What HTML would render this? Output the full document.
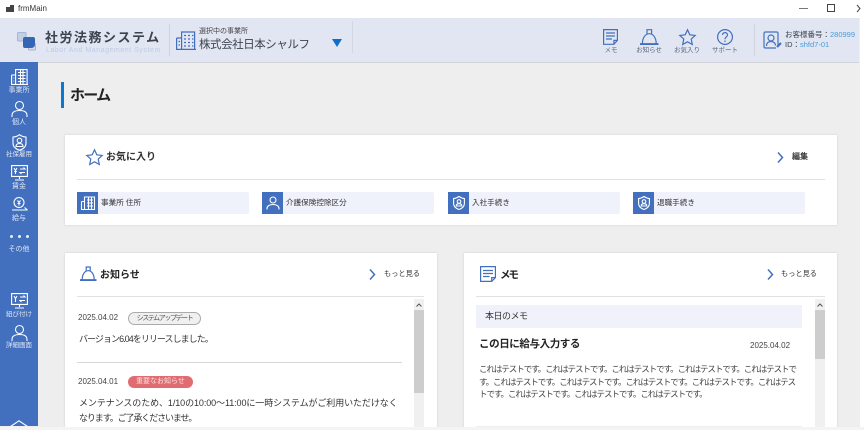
<!DOCTYPE html>
<html lang="ja"><head><meta charset="utf-8"><title>frmMain</title>
<style>
html,body{margin:0;padding:0}
body{width:864px;height:430px;position:relative;overflow:hidden;background:#fff;font-family:"Liberation Sans","Noto Sans CJK JP",sans-serif;color:#222}
.a{position:absolute;white-space:nowrap}
.card{position:absolute;background:#fff;box-shadow:0 0 2px #ccc}
svg{position:absolute;overflow:visible;fill:none}
.b{stroke:#4270be;stroke-width:1.2}
.w{stroke:#fff;stroke-width:1.1}
.nav{position:absolute;left:0;width:38px;text-align:center;color:#dfe6f5;font-size:7px;line-height:8px;white-space:nowrap}
.fav{position:absolute;top:192px;height:22px;width:172px;background:#eff2fa;border-radius:2px}
.fav i{position:absolute;left:0;top:0;width:21px;height:22px;background:#4270be}
.fav span{position:absolute;left:24px;top:5px;font-size:7.600px;line-height:12px;color:#333;white-space:nowrap}
.hd{position:absolute;text-align:center;font-size:6.500px;line-height:8px;color:#5c6780;top:47px;white-space:nowrap}
</style></head><body>
<!-- title bar -->
<svg style="left:6px;top:4px" width="9" height="9"><path d="M0 3h4v5H0zM4 1h4v7H4z" fill="#444"/></svg>
<div class="a" style="left:18px;top:3px;font-size:8px;line-height:12px;color:#333">frmMain</div>
<div class="a" style="left:799px;top:8px;width:9px;height:1px;background:#777"></div>
<div class="a" style="left:827px;top:4px;width:6px;height:6px;border:1px solid #444"></div>
<svg style="left:857px;top:5px" width="7" height="8"><path d="M0 0l3 3.500l-3 3.500" stroke="#444"/></svg>

<!-- background -->
<div class="a" style="left:0;top:18px;width:860px;height:409px;background:#eee"></div>
<div class="a" style="left:0;top:18px;width:859px;height:44px;background:#e1e6f2;border-bottom:1px solid #d3d5da"></div>
<div class="a" style="left:0;top:62px;width:38px;height:364px;background:#4270be"></div>

<!-- logo -->
<svg style="left:16px;top:30px" width="22" height="22">
<rect x="1.500" y="2.500" width="8.500" height="8.500" rx="1" fill="#c3cfe4" stroke="#a6b6d2"/>
<rect x="12.500" y="13.500" width="7" height="6.500" rx="1" fill="#d4dcec" stroke="#a6b6d2"/>
<path d="M7 9q0-2 2-2h8q2 0 2 2v5q0 4-4 4H9q-2 0-2-2z" fill="#3565b5"/>
</svg>
<div class="a" style="left:45px;top:28px;font-size:13px;line-height:20px;font-weight:bold;color:#3c4450;letter-spacing:1.500px">社労法務システム</div>
<div class="a" style="left:46px;top:46px;font-size:7px;line-height:9px;color:#bdcce6;letter-spacing:.55px">Labor And Management System</div>
<div class="a" style="left:169px;top:24px;width:1px;height:32px;background:#cfd3dc"></div>
<svg style="left:176px;top:31px" width="20" height="19"><path class="b" d="M.6 7h5M.6 18.400V7M5.600 18.400V1h13v17.400M0 18.400h20M8 4.500h2m2 0h2m2 0h1.500M8 8h2m2 0h2m2 0h1.500M8 11.500h2m2 0h2m2 0h1.500M8 15h2m2 0h2m2 0h1.500M2.500 10.500h1.500M2.500 14h1.500"/></svg>
<div class="a" style="left:199px;top:27px;font-size:7px;line-height:10px;color:#444">選択中の事業所</div>
<div class="a" style="left:199px;top:37px;font-size:11.500px;line-height:16px;color:#3c4450;letter-spacing:-.45px">株式会社日本シャルフ</div>
<svg style="left:332px;top:39px" width="10" height="8"><path d="M0 0h10L5 8z" fill="#0d6fcb"/></svg>
<div class="a" style="left:352px;top:21px;width:1px;height:32px;background:#d3d7e0"></div>

<!-- header right icons -->
<svg style="left:603px;top:29px" width="15" height="16"><path class="b" d="M.6.600h13.800v10.800l-3.500 3.900H.6zM3 4h9M3 7h9M3 10h6M10.900 15.300v-3.900h3.500"/></svg>
<div class="hd" style="left:596px;width:30px">メモ</div>
<svg style="left:640px;top:29px" width="19" height="16"><path class="b" d="M.6 14.700h17.300v.7H.6zM2.400 14.700c0-6 3-10 6.900-10s6.900 4 6.900 10M7 4.700V.7h4.600v4"/></svg>
<div class="hd" style="left:634px;width:30px">お知らせ</div>
<svg style="left:679px;top:29px" width="17" height="16"><path class="b" d="M8.500.8l2.300 5 5.400.6-4 3.700 1.100 5.400-4.800-2.700-4.800 2.700 1.100-5.400-4-3.700 5.400-.6z"/></svg>
<div class="hd" style="left:672px;width:30px">お気入り</div>
<svg style="left:717px;top:29px" width="16" height="16"><circle class="b" cx="8" cy="8" r="7.400"/><path class="b" d="M5.500 6c0-3.200 5-3.200 5 0 0 2-2.500 2-2.500 4.300M8 11.500v1.500"/></svg>
<div class="hd" style="left:710px;width:30px">サポート</div>
<div class="a" style="left:754px;top:24px;width:1px;height:32px;background:#cfd3dc"></div>
<svg style="left:763px;top:31px" width="19" height="19"><path class="b" d="M15 15.500V2.500q0-1.500-1.500-1.500h-11Q1 1 1 2.500v13q0 1.500 1.500 1.500H13"/><circle class="b" cx="8" cy="7" r="3"/><path class="b" d="M3.500 15c0-3 2-4.500 4.500-4.500s4.500 1.500 4.500 4"/><path d="M14 16l4-4" stroke="#4270be" stroke-width="2"/></svg>
<div class="a" style="left:785px;top:30px;font-size:7.500px;line-height:10px;color:#3c4450">お客様番号：<span style="color:#4a9ad8">280999</span></div>
<div class="a" style="left:785px;top:40px;font-size:7.500px;line-height:10px;color:#3c4450">ID：<span style="color:#4a9ad8">shfd7-01</span></div>

<!-- sidebar -->
<svg style="left:11px;top:69px" width="17" height="16"><path class="w" d="M.6 6h4M.6 15.400V6M4.600 15.400V.6h11.500v14.800M0 15.400h17M7 3.500h7.500M7 6.500h7.500M7 9.500h7.500M7 12.500h7.500M9.500.6v14.800M12 .6v14.800M2.500 9h.8M2.500 12h.8"/></svg>
<div class="nav" style="top:87px">事業所</div>
<svg style="left:11px;top:101px" width="17" height="16"><circle class="w" cx="8.500" cy="4.500" r="4"/><path class="w" d="M1 16v-1.500C1 11 4 9.500 8.500 9.500S16 11 16 14.500V16"/></svg>
<div class="nav" style="top:119px">個人</div>
<svg style="left:12px;top:134px" width="15" height="17"><path class="w" d="M7.500.7c2 1.500 4 2.200 6.500 2.400v6c0 3.500-3 6-6.500 7.200C4 15.100 1 12.600 1 9.100v-6C3.500 2.900 5.500 2.200 7.500.7z"/><circle class="w" cx="7.500" cy="6.500" r="2.300"/><path class="w" d="M4 12.500c0-2 1.500-3 3.500-3s3.500 1 3.500 3z"/></svg>
<div class="nav" style="top:151px;font-size:6.500px">社保雇用</div>
<svg style="left:11px;top:165px" width="17" height="17"><path class="w" d="M.6.600h15.800v10.800H.6zM8.500 11.400V14M4 15h9"/><path class="w" d="M9 4h5l-1.500-1.500M14 7.500H9l1.500 1.500M3 3l1.500 2.500L6 3M4.500 5.500V9M3.200 6.500h2.600"/></svg>
<div class="nav" style="top:183px">賃金</div>
<svg style="left:12px;top:197px" width="17" height="16"><circle class="w" cx="7" cy="5.500" r="5"/><path class="w" d="M5.500 3.500L7 5.500l1.500-2M7 5.500V8.500M5.500 6.500h3M0 13h15.500m-3-2.500l3 2.500"/></svg>
<div class="nav" style="top:215px">給与</div>
<div class="a" style="left:10px;top:235px;width:3px;height:3px;border-radius:50%;background:#e8edf7"></div>
<div class="a" style="left:18px;top:235px;width:3px;height:3px;border-radius:50%;background:#e8edf7"></div>
<div class="a" style="left:26px;top:235px;width:3px;height:3px;border-radius:50%;background:#e8edf7"></div>
<div class="nav" style="top:246px">その他</div>
<svg style="left:11px;top:293px" width="17" height="17"><path class="w" d="M.6.600h15.800v10.800H.6zM8.500 11.400V14M4 15h9"/><path class="w" d="M9 4h5l-1.500-1.500M14 7.500H9l1.500 1.500M3 3l1.500 2.500L6 3M4.500 5.500V9"/></svg>
<div class="nav" style="top:311px;font-size:6.500px">紐び付け</div>
<svg style="left:11px;top:325px" width="17" height="16"><circle class="w" cx="8.500" cy="4.500" r="4"/><path class="w" d="M1 16v-1.500C1 11 4 9.500 8.500 9.500S16 11 16 14.500V16"/></svg>
<div class="nav" style="top:342px;font-size:6.500px">詳細画面</div>
<svg style="left:10px;top:420px" width="18" height="7"><path class="w" d="M.5 6.500L9 .8l8.500 5.700"/></svg>

<!-- page title -->
<div class="a" style="left:61px;top:82px;width:3px;height:26px;background:#0d78d0"></div>
<div class="a" style="left:70px;top:85px;font-size:15px;line-height:22px;font-weight:bold;color:#222;letter-spacing:-1.700px">ホーム</div>

<!-- favourites -->
<div class="card" style="left:65px;top:135px;width:772px;height:90px"></div>
<svg style="left:86px;top:149px" width="17" height="16"><path class="b" d="M8.500.8l2.300 5 5.400.6-4 3.700 1.100 5.400-4.800-2.700-4.800 2.700 1.100-5.400-4-3.700 5.400-.6z"/></svg>
<div class="a" style="left:106px;top:151px;font-size:10px;line-height:14px;font-weight:bold;color:#333">お気に入り</div>
<svg style="left:777px;top:152px" width="7" height="11"><path d="M1 .5l4.500 5-4.500 5" stroke="#4270be" stroke-width="1.500"/></svg>
<div class="a" style="left:792px;top:151px;font-size:8px;line-height:12px;font-weight:bold;color:#333">編集</div>
<div class="a" style="left:77px;top:179px;width:748px;height:1px;background:#e2e2e2"></div>

<div class="fav" style="left:77px"><i></i><span>事業所 住所</span>
<svg style="left:4px;top:4px" width="14" height="14"><path class="w" d="M.5 5.500h3M.5 13.500v-8M3.500 13.500V1h10v12.500M0 13.500h14M6 4h6M6 7h6M6 10h6M7.500 1v12M10.500 1v12"/></svg></div>
<div class="fav" style="left:262px"><i></i><span>介護保険控除区分</span>
<svg style="left:4px;top:4px" width="14" height="14"><circle class="w" cx="7" cy="4" r="3"/><path class="w" d="M1 13.500v-1C1 10 3.500 8.500 7 8.500s6 1.500 6 4v1"/></svg></div>
<div class="fav" style="left:448px"><i></i><span>入社手続き</span>
<svg style="left:5px;top:4px" width="12" height="14"><path class="w" d="M6 .5c1.600 1.200 3.300 1.800 5.400 2v5c0 3-2.500 5-5.400 6-2.900-1-5.400-3-5.400-6v-5C2.700 2.300 4.400 1.700 6 .5z"/><circle class="w" cx="6" cy="5.500" r="1.800"/><path class="w" d="M3.200 10c0-1.500 1.200-2.300 2.800-2.300s2.800.8 2.800 2.300z"/></svg></div>
<div class="fav" style="left:633px"><i></i><span>退職手続き</span>
<svg style="left:5px;top:4px" width="12" height="14"><path class="w" d="M6 .5c1.600 1.200 3.300 1.800 5.400 2v5c0 3-2.500 5-5.400 6-2.900-1-5.400-3-5.400-6v-5C2.700 2.300 4.400 1.700 6 .5z"/><circle class="w" cx="6" cy="5.500" r="1.800"/><path class="w" d="M3.200 10c0-1.500 1.200-2.300 2.800-2.300s2.800.8 2.800 2.300z"/></svg></div>

<!-- news -->
<div class="card" style="left:65px;top:253px;width:372px;height:177px"></div>
<svg style="left:80px;top:266px" width="17" height="15"><path class="b" d="M.6 13.700h15.300v.7H.6zM2.200 13.700c0-5.500 2.700-9 6-9s6 3.500 6 9M6.200 4.700V1h4v3.700"/></svg>
<div class="a" style="left:100px;top:268px;font-size:10px;line-height:15px;font-weight:bold;color:#222">お知らせ</div>
<svg style="left:369px;top:269px" width="7" height="11"><path d="M1 .5l4.500 5-4.500 5" stroke="#4270be" stroke-width="1.500"/></svg>
<div class="a" style="left:384px;top:268px;font-size:7.200px;line-height:12px;color:#333">もっと見る</div>
<div class="a" style="left:77px;top:296px;width:347px;height:1px;background:#e2e2e2"></div>
<div class="a" style="left:414px;top:299px;width:10px;height:131px;background:#f0f0f0"></div>
<div class="a" style="left:414px;top:310px;width:10px;height:83px;background:#cdcdcd"></div>
<svg style="left:416px;top:303px" width="6" height="4"><path d="M.5 3.500L3 1l2.500 2.500" stroke="#555"/></svg>
<div class="a" style="left:78px;top:312px;font-size:8px;line-height:12px;color:#444">2025.04.02</div>
<div class="a" style="left:128px;top:312px;width:71px;height:11px;border:1px solid #aaa;border-radius:7px;background:#f0f0f0;text-align:center;font-size:7px;line-height:11px;letter-spacing:-1.400px;color:#555">システムアップデート</div>
<div class="a" style="left:79px;top:332px;font-size:9px;line-height:14px;color:#333;letter-spacing:-.95px">バージョン6.04をリリースしました。</div>
<div class="a" style="left:77px;top:362px;width:325px;height:1px;background:#d8d8d8"></div>
<div class="a" style="left:78px;top:376px;font-size:8px;line-height:12px;color:#444">2025.04.01</div>
<div class="a" style="left:128px;top:376px;width:65px;height:12px;border-radius:7px;background:#e06b70;text-align:center;font-size:7px;line-height:12px;color:#fbe6e6">重要なお知らせ</div>
<div class="a" style="left:79px;top:396px;font-size:9px;line-height:14.500px;color:#333"><span style="letter-spacing:-.09px">メンテナンスのため、1/10の10:00～11:00に一時システムがご利用いただけなく</span><br><span style="letter-spacing:-1.100px">なります。ご了承くださいませ。</span></div>

<!-- memo -->
<div class="card" style="left:464px;top:253px;width:373px;height:177px"></div>
<svg style="left:480px;top:266px" width="16" height="16"><path class="b" d="M.6.600h14.800v11l-3.700 3.800H.6zM3 4.500h10M3 7.500h10M3 10.500h6.500M11.700 15.400v-3.800h3.700"/></svg>
<div class="a" style="left:500px;top:268px;font-size:10.500px;line-height:15px;font-weight:bold;color:#222;letter-spacing:-2px">メモ</div>
<svg style="left:767px;top:269px" width="7" height="11"><path d="M1 .5l4.500 5-4.500 5" stroke="#4270be" stroke-width="1.500"/></svg>
<div class="a" style="left:781px;top:268px;font-size:7.200px;line-height:12px;color:#333">もっと見る</div>
<div class="a" style="left:476px;top:296px;width:349px;height:1px;background:#e2e2e2"></div>
<div class="a" style="left:815px;top:299px;width:10px;height:131px;background:#f0f0f0"></div>
<div class="a" style="left:815px;top:310px;width:10px;height:49px;background:#cdcdcd"></div>
<svg style="left:817px;top:303px" width="6" height="4"><path d="M.5 3.500L3 1l2.500 2.500" stroke="#555"/></svg>
<div class="a" style="left:476px;top:305px;width:326px;height:23px;background:#eff2fa"></div>
<div class="a" style="left:485px;top:310px;font-size:9px;line-height:13px;color:#333;letter-spacing:-.5px">本日のメモ</div>
<div class="a" style="left:479px;top:337px;font-size:10.500px;line-height:15px;font-weight:bold;color:#222;letter-spacing:-.4px">この日に給与入力する</div>
<div class="a" style="left:750px;top:340px;font-size:8px;line-height:12px;color:#444">2025.04.02</div>
<div class="a" style="left:479px;top:363px;font-size:8.500px;line-height:12.600px;color:#444;letter-spacing:-1.050px">これはテストです。これはテストです。これはテストです。これはテストです。これはテストで<br>す。これはテストです。これはテストです。これはテストです。これはテストです。これはテス<br>トです。これはテストです。これはテストです。これはテストです。</div>
<div class="a" style="left:476px;top:426px;width:326px;height:1px;background:#eee"></div>

<!-- window bottom -->
<div class="a" style="left:0;top:427px;width:864px;height:3px;background:#f4f4f4"></div>
</body></html>
